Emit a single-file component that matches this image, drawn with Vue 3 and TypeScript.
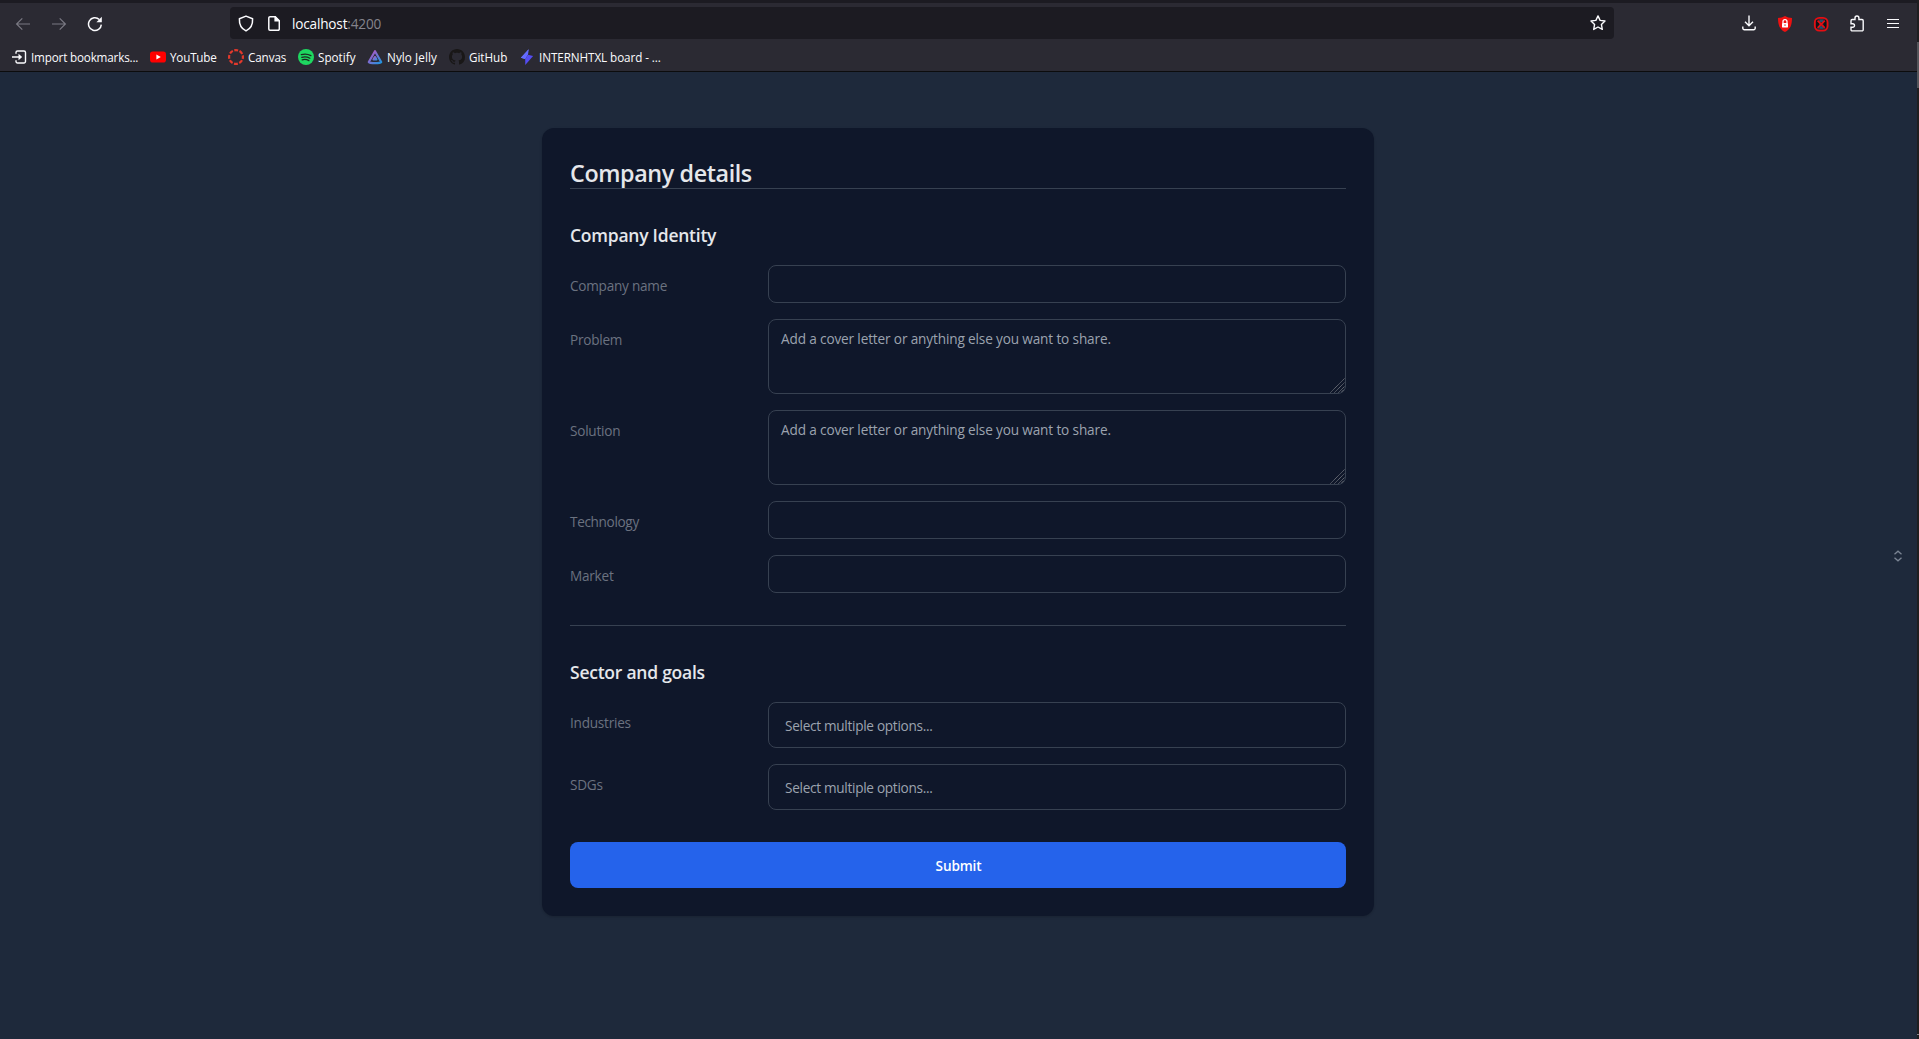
<script setup lang="ts">
interface Field {
  label: string
  kind: 'input' | 'textarea' | 'select'
}

interface Bookmark {
  name: string
  icon: string
  width: number
  spacing: number
}

const bookmarks: Bookmark[] = [
  { name: 'Import bookmarks...', icon: 'import', width: 139, spacing: -0.18 },
  { name: 'YouTube', icon: 'youtube', width: 78, spacing: -0.2 },
  { name: 'Canvas', icon: 'canvas', width: 70, spacing: -0.12 },
  { name: 'Spotify', icon: 'spotify', width: 69, spacing: 0 },
  { name: 'Nylo Jelly', icon: 'jelly', width: 82, spacing: 0.08 },
  { name: 'GitHub', icon: 'github', width: 70, spacing: -0.05 },
  { name: 'INTERNHTXL board - ...', icon: 'bolt', width: 150, spacing: -0.08 },
]

const identity: Field[] = [
  { label: 'Company name', kind: 'input' },
  { label: 'Problem', kind: 'textarea' },
  { label: 'Solution', kind: 'textarea' },
  { label: 'Technology', kind: 'input' },
  { label: 'Market', kind: 'input' },
]

const goals: Field[] = [
  { label: 'Industries', kind: 'select' },
  { label: 'SDGs', kind: 'select' },
]

const sections = [
  { title: 'Company Identity', fields: identity },
  { title: 'Sector and goals', fields: goals },
]
</script>

<template>
  <div class="window">
    <header class="chrome">
      <div class="navbar">
        <button class="tool dim" aria-label="Back">
          <svg width="16" height="16" viewBox="0 0 16 16"><path d="M15 8H1.600M7.300 2.300 1.600 8l5.700 5.700" /></svg>
        </button>
        <button class="tool dim" aria-label="Forward">
          <svg width="16" height="16" viewBox="0 0 16 16"><path d="M1 8h13.400M8.700 2.300 14.400 8l-5.700 5.700" /></svg>
        </button>
        <button class="tool" aria-label="Reload">
          <svg width="16" height="16" viewBox="0 0 16 16">
            <path d="M14.300 8.600A6.400 6.400 0 1 1 12.300 3.500" stroke-width="1.500" />
            <path d="M14.800.8v5.400H9.400z" fill="currentColor" stroke="none" />
          </svg>
        </button>
        <div class="urlbar">
          <svg width="16" height="17" viewBox="0 0 16 17">
            <path d="M8 1.100 14.600 3.700C14.900 9.300 12.700 13.600 8 15.900 3.300 13.600 1.100 9.300 1.400 3.700z" stroke-width="1.500" stroke-linejoin="round" />
          </svg>
          <svg class="page" width="12" height="15" viewBox="0 0 12 15">
            <path d="M2 .8h5.300l4 4V13a1.200 1.200 0 0 1-1.200 1.200H2A1.200 1.200 0 0 1 .8 13V2A1.200 1.200 0 0 1 2 .8z" stroke-width="1.500" />
            <path d="M7 .8V5h4.300z" fill="currentColor" />
          </svg>
          <span class="address">localhost<span class="port">:4200</span></span>
          <svg class="star" width="16" height="16" viewBox="0 0 16 16">
            <path d="m8 .9 2.100 4.500 4.900.6-3.600 3.400.9 5L8 12l-4.300 2.400.9-5L1 6l4.900-.6z" stroke-width="1.400" stroke-linejoin="round" />
          </svg>
        </div>
        <div class="actions">
          <button class="tool" aria-label="Downloads">
            <svg class="raised" width="14" height="16" viewBox="0 0 14 16">
              <path d="M7 .5v10M3 6.700l4 4 4-4M.8 11.500v1.700a1.500 1.500 0 0 0 1.500 1.500h9.400a1.500 1.500 0 0 0 1.500-1.500v-1.700" stroke-width="1.400" />
            </svg>
          </button>
          <button class="tool" aria-label="Ad blocker">
            <svg width="16" height="16" viewBox="0 0 16 16">
              <path d="M8 0c2 1.300 4.500 2 7 2 0 6.500-1.300 11.300-7 14C2.300 13.300 1 8.500 1 2c2.500 0 5-.7 7-2z" fill="#ee1111" stroke="none" />
              <path d="M6 7.200V5.600a2 2 0 0 1 4 0v1.600" stroke="#fff" stroke-width="1.300" />
              <rect x="5" y="7" width="6" height="4.500" rx=".4" fill="#fff" stroke="none" />
              <path d="M8 8.300v1.600" stroke="#e11" stroke-width="1" />
            </svg>
          </button>
          <button class="tool" aria-label="Script blocker">
            <svg width="16" height="16" viewBox="0 0 16 16">
              <path d="M3 4h3v8H3zM10.500 4h3v8h-3z" fill="#101217" stroke="none" />
              <path d="M6.500 3.500h4v2.500h-4zM6.500 10.300h4v2.500h-4z" fill="#24506e" stroke="none" />
              <rect x="1.800" y="1.800" width="12.800" height="12.800" rx="4.500" stroke="#e60d12" stroke-width="1.800" />
              <path d="m4.600 4.600 7.200 7.200M11.800 4.600l-7.200 7.200" stroke="#e60d12" stroke-width="1.700" />
            </svg>
          </button>
          <button class="tool" aria-label="Extensions">
            <svg width="16" height="17" viewBox="0 0 16 17">
              <path d="M6 4.500V3a1.900 1.900 0 0 1 3.900 0v1.500h3.100a1.200 1.200 0 0 1 1.200 1.200v9a1.200 1.200 0 0 1-1.200 1.200H3.200A1.200 1.200 0 0 1 2 14.700v-2.400h1.700a1.800 1.800 0 0 0 0-3.600H2V5.700a1.200 1.200 0 0 1 1.200-1.200z" stroke-width="1.400" />
            </svg>
          </button>
          <button class="tool" aria-label="Menu">
            <svg width="12" height="12" viewBox="0 0 12 12"><path d="M0 1.500h12M0 5.500h12M0 9.500h12" /></svg>
          </button>
        </div>
      </div>

      <nav class="bookmarks">
        <a v-for="b in bookmarks" :key="b.name" class="bookmark" :style="{ width: b.width + 'px', letterSpacing: b.spacing + 'px' }">
          <svg width="16" height="16" viewBox="0 0 16 16">
            <template v-if="b.icon === 'import'">
              <path d="M5 4.700V3.500A1.500 1.500 0 0 1 6.500 2H13a1.500 1.500 0 0 1 1.500 1.500v9A1.500 1.500 0 0 1 13 14H6.500A1.500 1.500 0 0 1 5 12.500v-1.200M1 8h7" stroke-width="1.400" />
              <path d="m7.500 4.700 3.700 3.300-3.700 3.300z" fill="currentColor" stroke="none" />
            </template>
            <template v-else-if="b.icon === 'youtube'">
              <rect x="0" y="2.500" width="16" height="11" rx="2.800" fill="#f00" stroke="none" />
              <path d="M6.400 5.500v5L10.800 8z" fill="#fff" stroke="none" />
            </template>
            <template v-else-if="b.icon === 'canvas'">
              <circle cx="8" cy="8" r="6.900" stroke="#e4392c" stroke-width="2.200" stroke-dasharray="3.900 1.519" stroke-dashoffset="1.950" />
            </template>
            <template v-else-if="b.icon === 'spotify'">
              <circle cx="8" cy="8" r="8" fill="#1ed760" stroke="none" />
              <path d="M3.300 5.600c3.200-.9 6.700-.6 9.600 1M3.800 8.300c2.700-.8 5.600-.5 8.100.9M4.200 10.800c2.300-.6 4.600-.4 6.700.8" stroke="#1b2a20" stroke-width="1.300" stroke-linecap="round" />
            </template>
            <template v-else-if="b.icon === 'jelly'">
              <defs>
                <linearGradient id="jelly" x1="0" y1="0" x2="1" y2="1">
                  <stop offset="0.200" stop-color="#a25cc8" />
                  <stop offset="1" stop-color="#1f95e0" />
                </linearGradient>
              </defs>
              <path d="M8 2.200 14.200 13c-1.200 1.500-11.200 1.500-12.400 0z" stroke="url(#jelly)" stroke-width="2.200" stroke-linejoin="round" />
              <path d="M8 6.700c.8 0 2.900 3.600 2.500 4.200-.4.700-4.600.7-5 0-.4-.6 1.700-4.200 2.500-4.200z" fill="url(#jelly)" stroke="none" />
            </template>
            <template v-else-if="b.icon === 'github'">
              <path fill="#191717" stroke="none" fill-rule="evenodd" d="M8 0C3.580 0 0 3.580 0 8c0 3.540 2.290 6.530 5.470 7.590.4.070.55-.17.55-.38 0-.19-.01-.82-.01-1.490-2.010.37-2.530-.49-2.690-.94-.09-.23-.48-.94-.82-1.130-.28-.15-.68-.52-.01-.53.63-.01 1.080.58 1.230.82.72 1.210 1.870.87 2.330.66.07-.52.28-.87.51-1.070-1.780-.2-3.640-.89-3.640-3.950 0-.87.31-1.590.82-2.150-.08-.2-.36-1.020.08-2.120 0 0 .67-.21 2.200.82.640-.18 1.320-.27 2-.27s1.360.09 2 .27c1.530-1.040 2.200-.82 2.200-.82.44 1.100.16 1.920.08 2.120.51.56.82 1.270.82 2.150 0 3.070-1.870 3.750-3.650 3.950.29.25.54.73.54 1.480 0 1.070-.01 1.930-.01 2.200 0 .21.15.46.55.38A8.010 8.010 0 0 0 16 8c0-4.420-3.580-8-8-8z" />
            </template>
            <template v-else>
              <path d="M9.700.2 1.900 8.800l4.300 1.300z" fill="#7b83ff" stroke="none" />
              <path d="M9.700.2 9 5.800l-2.800 4.300-4.300-1.300z" fill="#636bff" stroke="none" />
              <path d="M9 5.800 14.100 7 6.300 15.900l-.1-5.800z" fill="#544cf2" stroke="none" />
            </template>
          </svg>
          <span>{{ b.name }}</span>
        </a>
      </nav>
    </header>

    <main class="content">
      <form class="card" @submit.prevent>
        <h1 class="title">Company details</h1>
        <section v-for="s in sections" :key="s.title" class="section">
          <h2 class="subtitle">{{ s.title }}</h2>
          <div class="fields">
            <div v-for="f in s.fields" :key="f.label" class="row">
              <label class="label" :class="{ tight: f.label === 'Technology' }">{{ f.label }}</label>
              <input v-if="f.kind === 'input'" class="control" type="text" />
              <div v-else-if="f.kind === 'textarea'" class="area-wrap">
                <textarea class="control area" placeholder="Add a cover letter or anything else you want to share."></textarea>
                <svg class="grip" width="15" height="15" viewBox="0 0 15 15">
                  <path d="M.5 14.500l14-14M4.500 14.500l10-10M8.500 14.500l6-6M11.500 14l2.500-2.500" />
                </svg>
              </div>
              <button v-else class="control select" type="button">Select multiple options...</button>
            </div>
          </div>
        </section>
        <button class="submit" type="submit">Submit</button>
      </form>
      <svg class="updown" width="10" height="12" viewBox="0 0 10 12">
        <path d="m1.500 4.200 3.500-3 3.500 3M1.500 7.800l3.500 3 3.500-3" />
      </svg>
    </main>

    <div class="scrollbar"><div class="thumb"></div><div class="mark"></div></div>
  </div>
</template>

<style>
body {
  margin: 0;
  overflow: hidden;
  background: #1e293b;
}
</style>

<style scoped>
.window {
  position: relative;
  display: flex;
  flex-direction: column;
  height: 1039px;
  font-family: "Open Sans", "Noto Sans", sans-serif;
  background: #1e293b;
}

button {
  padding: 0;
  border: 0;
  background: none;
  font-family: inherit;
}

svg {
  flex: none;
  display: block;
  fill: none;
  stroke: currentColor;
  stroke-width: 1.2;
}

.chrome {
  box-sizing: border-box;
  height: 72px;
  border-top: 3px solid #1c1b22;
  border-bottom: 1px solid #0c0c0d;
  background: #2b2a33;
  color: #fbfbfe;
}

.navbar {
  display: flex;
  align-items: center;
  height: 40px;
  padding: 0 0 0 5px;
}

.tool {
  display: flex;
  align-items: center;
  justify-content: center;
  width: 36px;
  height: 36px;
  color: #fbfbfe;
}

.tool svg {
  margin-top: 1px;
}

.tool .raised {
  margin: -1px 1px 0 0;
}

.dim {
  color: #7a7983;
}

.urlbar {
  box-sizing: border-box;
  display: flex;
  align-items: center;
  width: 1384px;
  height: 32px;
  margin: 0 117px;
  padding: 0 8px;
  border-radius: 4px;
  background: #1c1b22;
}

.page {
  margin-left: 14px;
}

.address {
  flex: 1;
  margin-left: 12px;
  padding-top: 1px;
  font-size: 13.6px;
  line-height: 20px;
  letter-spacing: -0.18px;
}

.port {
  color: #85848c;
}

.actions {
  display: flex;
}

.bookmarks {
  display: flex;
  align-items: center;
  height: 28px;
  padding-left: 11px;
}

.bookmark {
  display: flex;
  align-items: center;
  gap: 4px;
  font-size: 11.7px;
  line-height: 16px;
  white-space: nowrap;
}

.content {
  position: relative;
  flex: 1;
  padding: 56px 0 0 542px;
}

.card {
  box-sizing: border-box;
  width: 832px;
  padding: 28px;
  border-radius: 12px;
  background: #0f172a;
  box-shadow: 0 1px 3px rgba(0, 0, 0, 0.1), 0 1px 2px rgba(0, 0, 0, 0.06);
}

.title {
  margin: 0;
  padding-top: 2px;
  border-bottom: 1px solid #374151;
  color: #e5e7eb;
  font-size: 23.3px;
  font-weight: 600;
  line-height: 30px;
  letter-spacing: -0.38px;
}

.section {
  padding: 32px 0;
}

.section + .section {
  border-top: 1px solid #374151;
}

.subtitle {
  margin: 0 0 16px;
  color: #e5e7eb;
  font-size: 17.5px;
  font-weight: 600;
  line-height: 28px;
  letter-spacing: -0.24px;
}

.fields {
  display: flex;
  flex-direction: column;
  gap: 16px;
}

.row {
  display: flex;
  align-items: flex-start;
}

.label {
  width: 198px;
  padding-top: 11px;
  color: #6b7280;
  font-size: 13.6px;
  line-height: 20px;
  letter-spacing: -0.24px;
}

.tight {
  letter-spacing: -0.34px;
}

.control {
  box-sizing: border-box;
  display: block;
  width: 578px;
  height: 38px;
  margin: 0;
  padding: 9px 12px;
  border: 1px solid #374151;
  border-radius: 8px;
  outline: none;
  background: #0f172a;
  color: #9ca3af;
  font-family: inherit;
  font-size: 13.6px;
  line-height: 20px;
  letter-spacing: -0.14px;
}

.control::placeholder {
  color: #9ca3af;
  opacity: 1;
}

.area-wrap {
  position: relative;
}

.area {
  height: 75px;
  resize: none;
  overflow: hidden;
}

.grip {
  position: absolute;
  right: 1px;
  bottom: 1px;
  color: #85878c;
  stroke-width: 0.9;
  stroke-dasharray: 1.1 0.5;
}

.select {
  height: 46px;
  padding: 1px 16px 0;
  text-align: left;
  letter-spacing: -0.29px;
}

.submit {
  display: block;
  width: 100%;
  height: 46px;
  padding: 1px 0 0 1px;
  border-radius: 8px;
  background: #2563eb;
  color: #fff;
  font-size: 13.6px;
  font-weight: 600;
  letter-spacing: -0.15px;
}

.updown {
  position: absolute;
  left: 1893px;
  top: 478px;
  color: #7b8594;
  stroke-width: 1.3;
}

.scrollbar {
  position: absolute;
  top: 0;
  right: 0;
  width: 2px;
  height: 100%;
  background: #1f1e20;
}

.thumb {
  height: 46px;
  margin-top: 42px;
  background: #55555a;
}

.mark {
  height: 1px;
  margin-top: 946px;
  background: #88888c;
}
</style>
